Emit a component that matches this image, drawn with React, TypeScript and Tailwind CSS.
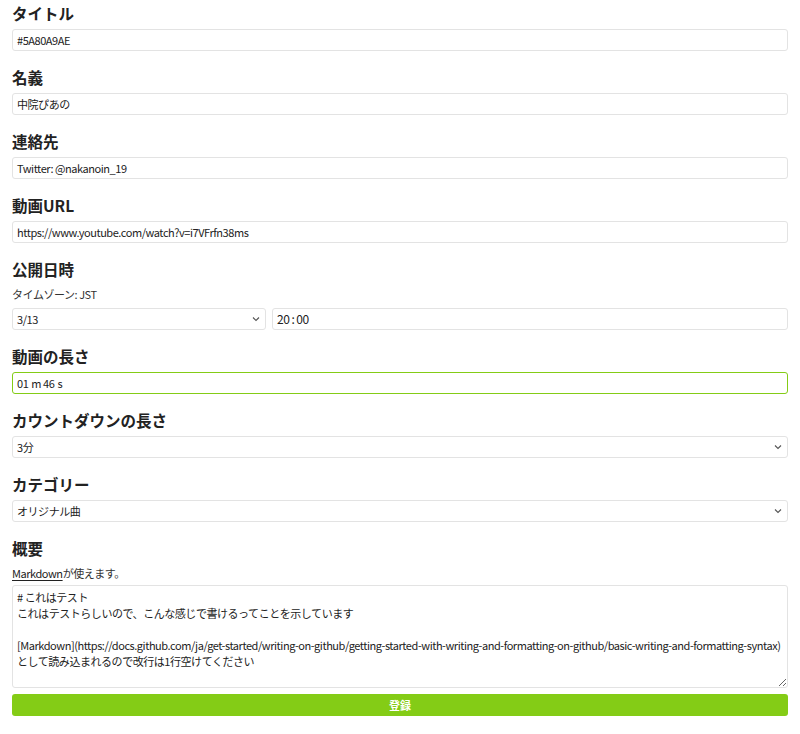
import React from "react";

const font = { fontFamily: '"Noto Sans CJK JP", "Noto Sans", sans-serif' };

function Chevron() {
  return (
    <svg width="8" height="6" viewBox="0 0 8 6" className="shrink-0">
      <path d="M1 1.5 L4 4.5 L7 1.5" fill="none" stroke="#555" strokeWidth="1.1" />
    </svg>
  );
}

function Heading({ children }: { children: React.ReactNode }) {
  return <h2 className="text-[15.5px] leading-[26px] font-bold text-[#222]">{children}</h2>;
}

function Field({ children, green }: { children: React.ReactNode; green?: boolean }) {
  return (
    <div
      className={`h-[22px] flex items-center px-[4px] rounded-[3px] border text-[11px] tracking-[-0.45px] text-[#222] bg-white ${
        green ? "border-[#84cc16]" : "border-[#e3e3e3]"
      }`}
    >
      {children}
    </div>
  );
}

function SelectBox({ children, className = "" }: { children: React.ReactNode; className?: string }) {
  return (
    <div
      className={`h-[22px] flex items-center justify-between pl-[4px] pr-[5px] rounded-[3px] border border-[#e3e3e3] text-[11px] tracking-[-0.45px] text-[#222] bg-white ${className}`}
    >
      <span>{children}</span>
      <Chevron />
    </div>
  );
}

export default function App() {
  const md =
    "# これはテスト\nこれはテストらしいので、こんな感じで書けるってことを示しています\n\n[Markdown](https://docs.github.com/ja/get-started/writing-on-github/getting-started-with-writing-and-formatting-on-github/basic-writing-and-formatting-syntax)\nとして読み込まれるので改行は1行空けてください";
  return (
    <div className="bg-white w-[800px] min-h-[734px] px-[12px]" style={font}>
      <div className="flex flex-col">
        <section className="pb-[13px]">
          <Heading>タイトル</Heading>
          <div className="mt-[3px]">
            <Field>#5A80A9AE</Field>
          </div>
        </section>
        <section className="pb-[13px]">
          <Heading>名義</Heading>
          <div className="mt-[3px]">
            <Field>中院ぴあの</Field>
          </div>
        </section>
        <section className="pb-[13px]">
          <Heading>連絡先</Heading>
          <div className="mt-[3px]">
            <Field>Twitter: @nakanoin_19</Field>
          </div>
        </section>
        <section className="pb-[13px]">
          <Heading>動画URL</Heading>
          <div className="mt-[3px]">
            <Field>https://www.youtube.com/watch?v=i7VFrfn38ms</Field>
          </div>
        </section>
        <section className="pb-[13px]">
          <Heading>公開日時</Heading>
          <p className="mt-[3px] text-[11px] tracking-[-0.45px] leading-[18px] text-[#333]">タイムゾーン: JST</p>
          <div className="mt-[5px] flex gap-[6px]">
            <SelectBox className="w-[254px]">3/13</SelectBox>
            <div className="flex-1">
              <Field>
                <span className="text-[12px]">20</span>
                <span className="text-[12px] mx-[2px]">:</span>
                <span className="text-[12px]">00</span>
              </Field>
            </div>
          </div>
        </section>
        <section className="pb-[13px]">
          <Heading>動画の長さ</Heading>
          <div className="mt-[3px]">
            <Field green>
              <span>01</span>
              <span className="ml-[3px]">m</span>
              <span className="ml-[2px]">46</span>
              <span className="ml-[3px]">s</span>
            </Field>
          </div>
        </section>
        <section className="pb-[13px]">
          <Heading>カウントダウンの長さ</Heading>
          <div className="mt-[3px]">
            <SelectBox>3分</SelectBox>
          </div>
        </section>
        <section className="pb-[13px]">
          <Heading>カテゴリー</Heading>
          <div className="mt-[3px]">
            <SelectBox>オリジナル曲</SelectBox>
          </div>
        </section>
        <section>
          <Heading>概要</Heading>
          <p className="mt-[3px] text-[11px] tracking-[-0.45px] leading-[18px] text-[#333]">
            <a className="underline underline-offset-2 text-[#222]">Markdown</a>が使えます。
          </p>
          <textarea
            className="mt-[3px] block w-full h-[103px] rounded-[3px] border border-[#e3e3e3] px-[4px] py-[3px] text-[11px] tracking-[-0.45px] leading-[16px] text-[#222] outline-none whitespace-pre"
            style={font}
            defaultValue={md}
            wrap="off"
          />
          <button className="mt-[6px] w-full h-[22px] rounded-[3px] bg-[#84cc16] text-white text-[11px] font-bold">
            登録
          </button>
        </section>
      </div>
    </div>
  );
}
